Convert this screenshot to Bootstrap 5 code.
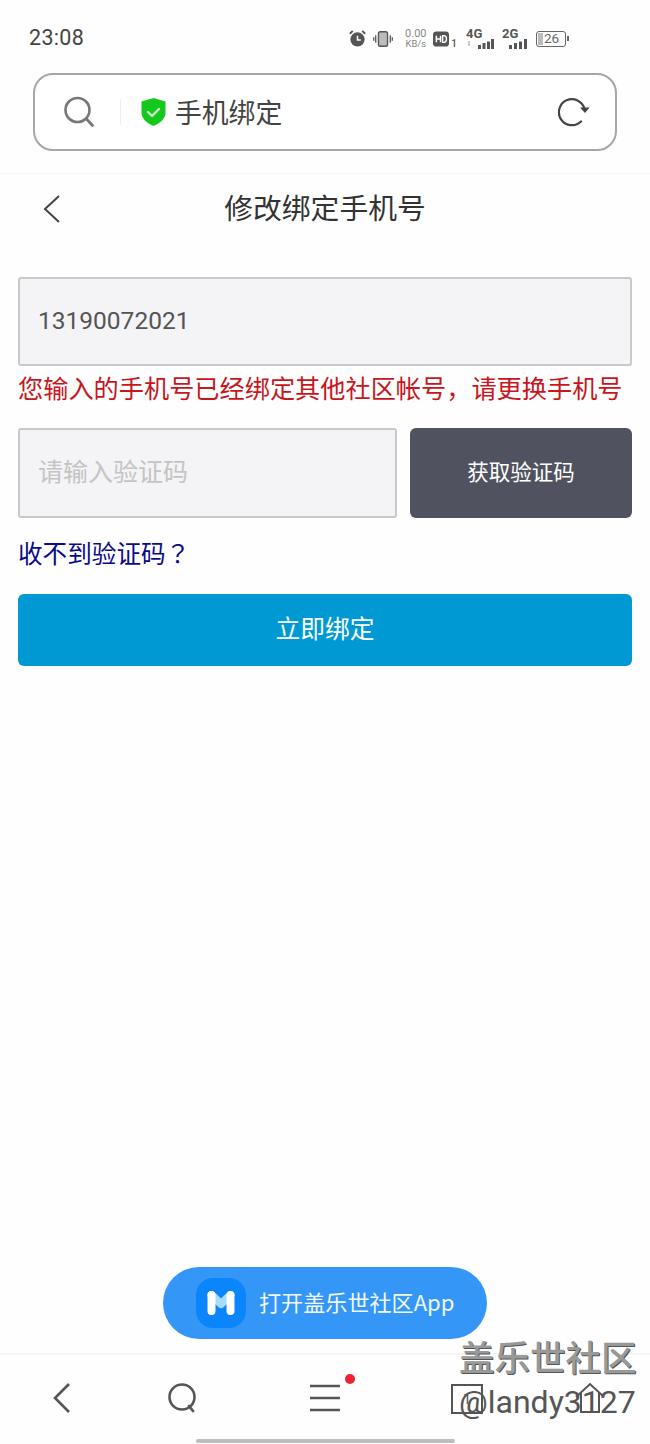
<!DOCTYPE html>
<html lang="zh-CN">
<head>
  <meta charset="UTF-8">
  <meta name="viewport" content="width=device-width, initial-scale=1.0">
  <title>修改绑定手机号</title>
  <link rel="stylesheet" href="https://cdn.jsdelivr.net/npm/bootstrap@5.3.0/dist/css/bootstrap.min.css">
  <style>
    body {
      font-family: "Noto Sans CJK SC", "Noto Sans", sans-serif;
      background: #fff;
      color: #333;
    }
    .phone-page { width: 650px; height: 1444px; overflow: hidden; background: #fefefe; }

    /* status bar */
    .status-bar { height: 73px; padding: 4px 84px 0 29px; color: #555; }
    .status-time { font-family: Roboto, sans-serif; font-size: 21.5px; letter-spacing: .3px; color: #444; }
    .stat-vibrate { margin-left: 6px; }
    .net-speed { font-family: Roboto, sans-serif; font-size: 11px; line-height: 10px; color: #888; width: 23px; margin-left: 11px; text-align: center; white-space: nowrap; }
    .net-speed small { font-size: 9.5px; }
    .stat-hd { margin-left: 6px; gap: 2px; }
    .hd-count { font-family: Roboto, sans-serif; font-size: 10px; line-height: 9px; font-weight: 500; color: #555; }
    .stat-net { width: 28px; margin-left: 9px; }
    .stat-net2 { margin-left: 8px; }
    .signal-label { font-family: Roboto, sans-serif; font-weight: 700; font-size: 13px; line-height: 10px; color: #555; }
    .battery-box { width: 30px; height: 16px; margin-left: 6px; border: 1.5px solid #666; border-radius: 3px; font-family: Roboto, sans-serif; font-size: 13.5px; line-height: 13px; color: #666; padding-left: 7px; position: relative; }
    .battery-box::before { content: ""; position: absolute; left: 1px; top: 1px; bottom: 1px; width: 5px; background: #bbb; }
    .battery-box::after { content: ""; position: absolute; right: -4px; top: 4px; width: 2px; height: 5px; background: #666; }

    /* address bar */
    .address-bar { height: 78px; margin: 0 33px; border: 2px solid #a6a6a6; border-radius: 20px; padding: 0 25px 0 28px; background: #fff; }
    .address-sep { width: 1px; height: 26px; background: #eee; margin: 0 20px 0 25px; }
    .address-text { font-size: 26.8px; line-height: 1; color: #444; margin: 0 0 0 9px; }

    /* page title */
    .title-row { height: 71px; margin-top: 22px; border-top: 1px solid #f6f6f6; padding-left: 41px; }
    .title-text { flex: 1; padding: 0 61px 4px 0; text-align: center; font-size: 28.8px; line-height: 1; color: #333; }

    /* form */
    .bind-form { padding: 33px 18px 0; }
    .field-box.form-control { height: 90px; border: 2px solid #c9c9c9; border-radius: 3px; background: #f4f3f6; font-family: Roboto, "Noto Sans CJK SC", sans-serif; font-size: 24.5px; color: #555; padding: 0 18px 2px; box-shadow: none; }
    .field-box.form-control::placeholder { color: #c4c4c4; font-family: "Noto Sans CJK SC", sans-serif; font-size: 25px; opacity: 1; }
    .field-box.field-phone { height: 89px; }
    .error-line { font-size: 25.2px; line-height: 1; color: #c8161d; margin: 9px 0 28px 0; white-space: nowrap; }
    .code-row { gap: 13px; }
    .btn-code.btn { flex: 0 0 222px; height: 90px; padding-bottom: 11px; background: #50535f; border: 0; border-radius: 6px; color: #fff; font-size: 21.5px; }
    .help-link { display: block; font-size: 24.6px; line-height: 1; color: #0a0a8c; text-decoration: none; margin: 22px 0 29px 0; }
    .help-mark { font-family: "Noto Sans CJK TC", sans-serif; }
    .btn-bind.btn { height: 72px; padding-bottom: 11px; background: #0099d4; border: 0; border-radius: 6px; color: #fff; font-size: 24.8px; }

    /* floating open-app pill */
    .open-app { position: absolute; left: 163px; top: 1267px; width: 324px; height: 72px; border-radius: 36px; background: #3497f7; color: #f2f8ff; font-size: 22.1px; padding-left: 33px; }
    .open-app-text { margin-top: -2px; }
    .app-logo { width: 50px; height: 50px; border-radius: 17px; background: #0b85fb; margin-right: 13px; }

    /* bottom bar */
    .bottom-bar { height: 91px; border-top: 2px solid #f6f6f6; padding: 27px 0 0 50px; position: relative; }
    .nav-search { margin-left: 93px; }
    .nav-menu { margin-left: 112px; }
    .nav-tabs-count { margin: 2px 0 0 110px; width: 32px; height: 30px; border: 2px solid #555; font-family: Roboto, sans-serif; font-size: 15px; line-height: 26px; text-align: center; color: #555; }
    .nav-home { margin-left: 91px; }
    .nav-dot { position: absolute; left: 345px; top: 19px; width: 10px; height: 10px; border-radius: 50%; background: #ee2233; }
    .home-pill { position: absolute; left: 196px; top: 84px; width: 259px; height: 4px; border-radius: 2px; background: #bdbdbd; }

    /* watermark */
    .mark-title { position: absolute; left: 459px; top: 1336px; font-size: 35.5px; line-height: 1.1; font-weight: 500; color: #999; text-shadow: 1px 1px 0 #555; white-space: nowrap; }
    .mark-user { position: absolute; left: 459px; top: 1385px; font-family: Roboto, sans-serif; font-size: 32px; line-height: 1.1; color: #555; white-space: nowrap; }
  </style>
</head>
<body class="m-0">
  <div class="phone-page position-relative d-flex flex-column">

    <div class="status-bar d-flex align-items-center justify-content-between flex-shrink-0">
      <span class="status-time">23:08</span>
      <div class="d-flex align-items-center">
        <svg width="19" height="19" viewBox="0 0 20 20"><path d="M2 5l3-3M18 5l-3-3" stroke="#555" stroke-width="2" fill="none"/><circle cx="10" cy="11" r="7.5" fill="#555"/><path d="M10 7v4.5h3.5" stroke="#fff" stroke-width="1.6" fill="none"/></svg>
        <svg class="stat-vibrate" width="20" height="18" viewBox="0 0 22 18"><rect x="6" y="1" width="10" height="16" rx="2" fill="#bbb" stroke="#555" stroke-width="1.5"/><path d="M3 5v8M0.8 7v4M19 5v8M21.2 7v4" stroke="#555" stroke-width="1.4"/></svg>
        <div class="net-speed">0.00<br><small>KB/s</small></div>
        <div class="stat-hd d-flex align-items-end">
          <svg width="16" height="18" viewBox="0 0 19 18"><rect width="19" height="18" rx="4" fill="#555"/><path d="M4 5v8M9 5v8M4 9h5" stroke="#fff" stroke-width="1.8" fill="none"/><path d="M11.5 5v8h1.5c4 0 4-8 0-8z" stroke="#fff" stroke-width="1.6" fill="none"/></svg>
          <span class="hd-count">1</span>
        </div>
        <div class="stat-net d-flex flex-column">
          <span class="signal-label">4G</span>
          <svg width="28" height="10" viewBox="0 0 28 10"><path d="M12 6h3v4h-3zM16.5 4h3v6h-3zM21 2.5h3v7.5h-3zM25 0h3v10h-3z" fill="#555"/><path d="M3 2v5" stroke="#bbb" stroke-width="1.5"/></svg>
        </div>
        <div class="stat-net stat-net2 d-flex flex-column">
          <span class="signal-label">2G</span>
          <svg width="28" height="10" viewBox="0 0 28 10"><path d="M7 6h3v4H7zM12 4h3v6h-3zM17 2.5h3v7.5h-3zM22 0h3v10h-3z" fill="#555"/></svg>
        </div>
        <div class="battery-box">26</div>
      </div>
    </div>

    <div class="address-bar d-flex align-items-center flex-shrink-0">
      <svg width="32" height="32" viewBox="0 0 32 32"><circle cx="14.5" cy="14" r="12" fill="none" stroke="#777" stroke-width="2.6"/><path d="M23.5 23l6 6.5" stroke="#777" stroke-width="2.8" stroke-linecap="round"/></svg>
      <span class="address-sep"></span>
      <svg width="25" height="28" viewBox="0 0 25 28"><path d="M12.5 0l12 3.5v11c0 6-5 10.5-12 13.5-7-3-12-7.5-12-13.5v-11z" fill="#14c81e"/><path d="M7 14l4 4 7-7" stroke="#d8f8d8" stroke-width="2.2" fill="none" stroke-linecap="round" stroke-linejoin="round"/></svg>
      <span class="address-text">手机绑定</span>
      <svg class="ms-auto" width="32" height="30" viewBox="0 0 32 30"><path d="M26.5 12A13 13 0 1 0 23 24.5" fill="none" stroke="#444" stroke-width="2.2" stroke-linecap="round"/><path d="M22 10.5l9.5 0-4.500 5.500z" fill="#444"/></svg>
    </div>

    <div class="title-row d-flex align-items-center flex-shrink-0">
      <svg width="20" height="30" viewBox="0 0 20 30"><path d="M18 2L4 15l14 13" fill="none" stroke="#444" stroke-width="2"/></svg>
      <span class="title-text">修改绑定手机号</span>
    </div>

    <form class="bind-form flex-grow-1">
      <input class="field-box field-phone form-control" type="text" value="13190072021">
      <p class="error-line">您输入的手机号已经绑定其他社区帐号，请更换手机号</p>
      <div class="code-row d-flex">
        <input class="field-box form-control" type="text" placeholder="请输入验证码">
        <button type="button" class="btn btn-code">获取验证码</button>
      </div>
      <a class="help-link" href="#">收不到验证码<span class="help-mark" lang="zh-TW">？</span></a>
      <button type="button" class="btn btn-bind w-100">立即绑定</button>
    </form>

    <div class="bottom-bar d-flex align-items-start flex-shrink-0">
      <svg width="24" height="32" viewBox="0 0 24 32"><path d="M19 2L5 16l14 14" fill="none" stroke="#555" stroke-width="2.6"/></svg>
      <svg class="nav-search" width="30" height="32" viewBox="0 0 30 32"><circle cx="15" cy="15" r="12.5" fill="none" stroke="#555" stroke-width="2.6"/><path d="M22 24l4 5" stroke="#555" stroke-width="2.8" stroke-linecap="round"/></svg>
      <svg class="nav-menu" width="32" height="32" viewBox="0 0 32 32"><path d="M1 4h30M1 16h30M1 28h30" stroke="#555" stroke-width="2.6"/></svg>
      <span class="nav-tabs-count">1</span>
      <svg class="nav-home" width="32" height="32" viewBox="0 0 32 32"><path d="M2 15L16 2l14 13M7 11v19h18V11" fill="none" stroke="#555" stroke-width="2"/></svg>
      <span class="nav-dot"></span>
      <span class="home-pill"></span>
    </div>

    <div class="open-app d-flex align-items-center">
      <div class="app-logo d-flex align-items-center justify-content-center flex-shrink-0">
        <svg width="28" height="24" viewBox="0 0 28 24"><path d="M4.5 4l9.5 9 9.5-9" fill="none" stroke="#a6dcff" stroke-width="8" stroke-linecap="round" stroke-linejoin="round"/><path d="M4.5 4v16M23.5 4v16" fill="none" stroke="#fff" stroke-width="8" stroke-linecap="round"/></svg>
      </div>
      <span class="open-app-text">打开盖乐世社区App</span>
    </div>

    <div class="mark-title">盖乐世社区</div>
    <div class="mark-user">@landy3127</div>
  </div>
  <script src="https://cdn.jsdelivr.net/npm/bootstrap@5.3.0/dist/js/bootstrap.bundle.min.js"></script>
</body>
</html>
